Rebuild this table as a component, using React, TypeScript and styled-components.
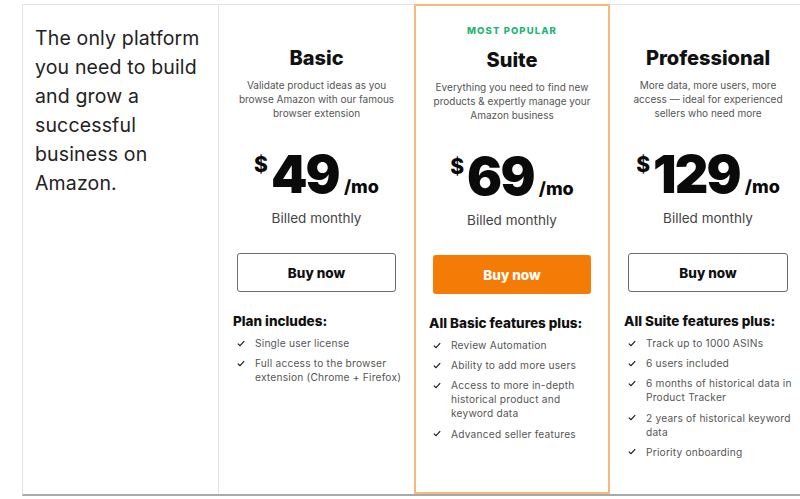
import React from 'react';
import styled, { createGlobalStyle } from 'styled-components';

const Global = createGlobalStyle`
  html, body { margin: 0; padding: 0; background: #fff; }
  body { font-family: Inter, "Open Sans", sans-serif; color: #222; }
  * { box-sizing: border-box; }
`;

const Page = styled.div`
  width: 800px;
  height: 499px;
  overflow: hidden;
  padding: 4px 0 0 22px;
`;

const Board = styled.div`
  display: grid;
  grid-template-columns: 196px 195px 196px 196px;
  width: 784px;
  height: 492px;
  border-top: 1px solid #e1e4e6;
  border-left: 1px solid #e1e4e6;
  border-bottom: 2px solid #a9a9a9;
`;

const Intro = styled.div`
  padding: 19px 10px 0 12px;
  border-right: 1px solid #e1e4e6;
  font-size: 19.5px;
  line-height: 29px;
  letter-spacing: 0.15px;
  color: #222;
  font-weight: 400;
`;

const Plan = styled.section<{ $featured?: boolean }>`
  display: flex;
  flex-direction: column;
  padding: ${(p) => (p.$featured ? '18px 17px 0' : '19px 18px 0')};
  ${(p) => (p.$featured ? `border: 2px solid #f8b77c; margin-top: -1px;` : '')}
`;

const Tag = styled.div<{ $hidden?: boolean; $gap: number }>`
  height: 14px;
  line-height: 14px;
  font-size: 9.5px;
  font-weight: 800;
  letter-spacing: 1.1px;
  color: #1fb574;
  text-align: center;
  visibility: ${(p) => (p.$hidden ? 'hidden' : 'visible')};
  margin-bottom: ${(p) => p.$gap}px;
`;

const Title = styled.h2`
  margin: 0;
  font-size: 20px;
  line-height: 26px;
  font-weight: 800;
  text-align: center;
  color: #111;
`;

const Desc = styled.p`
  margin: 7px 0 0;
  font-size: 10px;
  line-height: 14px;
  color: #555;
  text-align: center;
  white-space: nowrap;
`;

const PriceRow = styled.div`
  display: flex;
  justify-content: center;
  align-items: baseline;
  margin-top: 27px;
  height: 56px;
  color: #0a0a0a;
`;

const Currency = styled.span`
  align-self: flex-start;
  font-size: 21px;
  font-weight: 800;
  line-height: 21px;
  margin-top: 7px;
  margin-right: 3px;
`;

const Amount = styled.span`
  font-size: 52px;
  line-height: 56px;
  font-weight: 900;
  letter-spacing: -1.8px;
`;

const Per = styled.span`
  font-size: 18px;
  font-weight: 800;
  margin-left: 5px;
`;

const Billed = styled.div`
  margin-top: 6px;
  font-size: 13.5px;
  line-height: 18px;
  color: #444;
  text-align: center;
`;

const BuyButton = styled.button<{ $primary?: boolean }>`
  margin-top: 26px;
  height: 39px;
  width: 100%;
  border-radius: 3px;
  font-family: inherit;
  font-size: 13.5px;
  font-weight: 800;
  cursor: pointer;
  border: ${(p) => (p.$primary ? 'none' : '1px solid #6b6b6b')};
  background: ${(p) => (p.$primary ? '#f47b06' : '#fff')};
  color: ${(p) => (p.$primary ? '#fff' : '#111')};
`;

const Includes = styled.div`
  margin: 20px 0 0 -4px;
`;

const IncludesTitle = styled.h3`
  margin: 0;
  font-size: 13.5px;
  line-height: 18px;
  font-weight: 800;
  color: #111;
`;

const List = styled.ul`
  list-style: none;
  margin: 6px 0 0 4px;
  padding: 0;
  display: flex;
  flex-direction: column;
  gap: 6.2px;
`;

const Item = styled.li`
  display: flex;
  align-items: flex-start;
  font-size: 10.2px;
  letter-spacing: 0.2px;
  line-height: 14px;
  color: #555;
  white-space: nowrap;
`;

const CheckBox = styled.span`
  flex: 0 0 18px;
  height: 14px;
  display: flex;
  align-items: center;
`;

const Check = () => (
  <svg width="8" height="7" viewBox="0 0 8 7">
    <path d="M0.8 3.6 L3 5.6 L7.2 1.2" fill="none" stroke="#1a1a1a" strokeWidth="1.2" />
  </svg>
);

type PlanData = {
  name: string;
  desc: string[];
  price: string;
  heading: string;
  items: string[][];
  featured?: boolean;
};

const plans: PlanData[] = [
  {
    name: 'Basic',
    desc: ['Validate product ideas as you', 'browse Amazon with our famous', 'browser extension'],
    price: '49',
    heading: 'Plan includes:',
    items: [['Single user license'], ['Full access to the browser', 'extension (Chrome + Firefox)']],
  },
  {
    name: 'Suite',
    featured: true,
    desc: ['Everything you need to find new', 'products & expertly manage your', 'Amazon business'],
    price: '69',
    heading: 'All Basic features plus:',
    items: [
      ['Review Automation'],
      ['Ability to add more users'],
      ['Access to more in-depth', 'historical product and', 'keyword data'],
      ['Advanced seller features'],
    ],
  },
  {
    name: 'Professional',
    desc: ['More data, more users, more', 'access — ideal for experienced', 'sellers who need more'],
    price: '129',
    heading: 'All Suite features plus:',
    items: [
      ['Track up to 1000 ASINs'],
      ['6 users included'],
      ['6 months of historical data in', 'Product Tracker'],
      ['2 years of historical keyword', 'data'],
      ['Priority onboarding'],
    ],
  },
];

const Lines = ({ lines }: { lines: string[] }) => (
  <>
    {lines.map((l, i) => (
      <React.Fragment key={i}>
        {i > 0 && <br />}
        {l}
      </React.Fragment>
    ))}
  </>
);

export default function App() {
  return (
    <>
      <Global />
      <Page>
        <Board>
          <Intro>
            The only platform
            <br />
            you need to build
            <br />
            and grow a
            <br />
            successful
            <br />
            business on
            <br />
            Amazon.
          </Intro>
          {plans.map((p) => (
            <Plan key={p.name} $featured={p.featured}>
              <Tag $hidden={!p.featured} $gap={p.featured ? 9 : 7}>
                MOST POPULAR
              </Tag>
              <Title>{p.name}</Title>
              <Desc>
                <Lines lines={p.desc} />
              </Desc>
              <PriceRow>
                <Currency>$</Currency>
                <Amount>{p.price}</Amount>
                <Per>/mo</Per>
              </PriceRow>
              <Billed>Billed monthly</Billed>
              <BuyButton $primary={p.featured}>Buy now</BuyButton>
              <Includes>
                <IncludesTitle>{p.heading}</IncludesTitle>
                <List>
                  {p.items.map((it, i) => (
                    <Item key={i}>
                      <CheckBox>
                        <Check />
                      </CheckBox>
                      <span>
                        <Lines lines={it} />
                      </span>
                    </Item>
                  ))}
                </List>
              </Includes>
            </Plan>
          ))}
        </Board>
      </Page>
    </>
  );
}
